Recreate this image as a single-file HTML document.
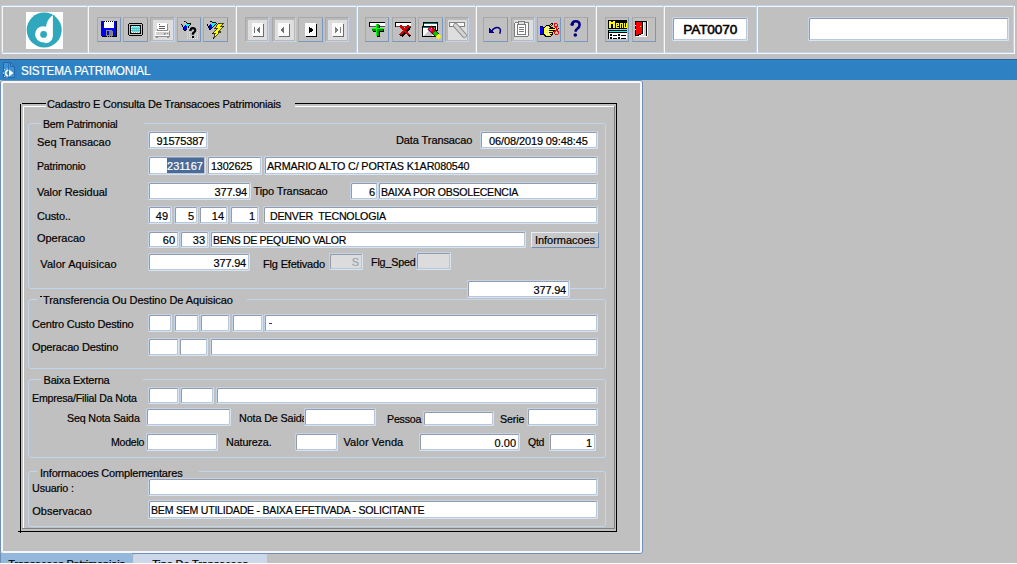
<!DOCTYPE html>
<html><head><meta charset="utf-8"><style>
html,body{margin:0;padding:0;}
body{width:1017px;height:564px;overflow:hidden;background:#c0c0c0;position:relative;font-family:'Liberation Sans', sans-serif;}
body>div, body>svg{position:absolute;white-space:pre;}
</style></head><body>
<div style="left:2px;top:6px;width:1013px;height:48px;box-sizing:border-box;border:1px solid #f4f8fc"></div>
<div style="left:1px;top:5px;width:1013px;height:48px;box-sizing:border-box;border:1px solid #bed2ec"></div>
<div style="left:87px;top:6px;width:1px;height:47px;background:#bed2ec"></div>
<div style="left:88px;top:6px;width:1px;height:47px;background:#f4f8fc"></div>
<div style="left:235px;top:6px;width:1px;height:47px;background:#bed2ec"></div>
<div style="left:236px;top:6px;width:1px;height:47px;background:#f4f8fc"></div>
<div style="left:356px;top:6px;width:1px;height:47px;background:#bed2ec"></div>
<div style="left:357px;top:6px;width:1px;height:47px;background:#f4f8fc"></div>
<div style="left:475px;top:6px;width:1px;height:47px;background:#bed2ec"></div>
<div style="left:476px;top:6px;width:1px;height:47px;background:#f4f8fc"></div>
<div style="left:595px;top:6px;width:1px;height:47px;background:#bed2ec"></div>
<div style="left:596px;top:6px;width:1px;height:47px;background:#f4f8fc"></div>
<div style="left:663px;top:6px;width:1px;height:47px;background:#bed2ec"></div>
<div style="left:664px;top:6px;width:1px;height:47px;background:#f4f8fc"></div>
<div style="left:756px;top:6px;width:1px;height:47px;background:#bed2ec"></div>
<div style="left:757px;top:6px;width:1px;height:47px;background:#f4f8fc"></div>
<div style="left:26px;top:12px;width:37px;height:37px;background:#fff"></div>
<svg style="position:absolute;left:26px;top:12px" width="37" height="37" viewBox="0 0 37 37"><circle cx="18.2" cy="18" r="17.5" fill="#2fa8bd"/><circle cx="17.2" cy="22.3" r="8.1" fill="#fff"/><path d="M26.9 3.2 L26.9 23.5 C26.9 28 24 31.2 18.5 31.2 L19.8 17 C20 10.5 23 5.5 26.9 3.2 Z" fill="#fff"/><circle cx="17.6" cy="22.4" r="3.4" fill="#2fa8bd"/></svg>
<div style="left:97px;top:17px;width:24px;height:25px;box-sizing:border-box;border:1px solid;border-color:#a8a8a8 #7898c0 #7898c0 #a8a8a8"></div>
<div style="left:123px;top:17px;width:25px;height:25px;box-sizing:border-box;border:1px solid;border-color:#a8a8a8 #7898c0 #7898c0 #a8a8a8"></div>
<div style="left:150px;top:17px;width:25px;height:25px;box-sizing:border-box;border:1px solid;border-color:#a8a8a8 #c4d4ec #c4d4ec #a8a8a8"></div>
<div style="left:151px;top:18px;width:23px;height:23px;box-sizing:border-box;border:solid #b9b9b9;border-width:2px 1px 1px 2px;background:#dedede"></div>
<div style="left:177px;top:17px;width:24px;height:25px;box-sizing:border-box;border:1px solid;border-color:#a8a8a8 #7898c0 #7898c0 #a8a8a8"></div>
<div style="left:203px;top:17px;width:25px;height:25px;box-sizing:border-box;border:1px solid;border-color:#a8a8a8 #7898c0 #7898c0 #a8a8a8"></div>
<div style="left:245px;top:17px;width:24px;height:25px;box-sizing:border-box;border:1px solid;border-color:#a8a8a8 #c4d4ec #c4d4ec #a8a8a8"></div>
<div style="left:246px;top:18px;width:22px;height:23px;box-sizing:border-box;border:solid #b9b9b9;border-width:2px 1px 1px 2px;background:#dedede"></div>
<div style="left:272px;top:17px;width:24px;height:25px;box-sizing:border-box;border:1px solid;border-color:#a8a8a8 #c4d4ec #c4d4ec #a8a8a8"></div>
<div style="left:273px;top:18px;width:22px;height:23px;box-sizing:border-box;border:solid #b9b9b9;border-width:2px 1px 1px 2px;background:#dedede"></div>
<div style="left:298px;top:17px;width:25px;height:25px;box-sizing:border-box;border:1px solid;border-color:#a8a8a8 #7898c0 #7898c0 #a8a8a8"></div>
<div style="left:325px;top:17px;width:24px;height:25px;box-sizing:border-box;border:1px solid;border-color:#a8a8a8 #c4d4ec #c4d4ec #a8a8a8"></div>
<div style="left:326px;top:18px;width:22px;height:23px;box-sizing:border-box;border:solid #b9b9b9;border-width:2px 1px 1px 2px;background:#dedede"></div>
<div style="left:365px;top:17px;width:24px;height:25px;box-sizing:border-box;border:1px solid;border-color:#a8a8a8 #7898c0 #7898c0 #a8a8a8"></div>
<div style="left:392px;top:17px;width:24px;height:25px;box-sizing:border-box;border:1px solid;border-color:#a8a8a8 #7898c0 #7898c0 #a8a8a8"></div>
<div style="left:418px;top:17px;width:25px;height:25px;box-sizing:border-box;border:1px solid;border-color:#a8a8a8 #7898c0 #7898c0 #a8a8a8"></div>
<div style="left:445px;top:17px;width:24px;height:25px;box-sizing:border-box;border:1px solid;border-color:#a8a8a8 #c4d4ec #c4d4ec #a8a8a8"></div>
<div style="left:446px;top:18px;width:22px;height:23px;box-sizing:border-box;border:solid #b9b9b9;border-width:2px 1px 1px 2px;background:#dedede"></div>
<div style="left:483px;top:17px;width:25px;height:25px;box-sizing:border-box;border:1px solid;border-color:#a8a8a8 #7898c0 #7898c0 #a8a8a8"></div>
<div style="left:511px;top:17px;width:24px;height:25px;box-sizing:border-box;border:1px solid;border-color:#a8a8a8 #c4d4ec #c4d4ec #a8a8a8"></div>
<div style="left:512px;top:18px;width:22px;height:23px;box-sizing:border-box;border:solid #b9b9b9;border-width:2px 1px 1px 2px;background:#dedede"></div>
<div style="left:537px;top:17px;width:24px;height:25px;box-sizing:border-box;border:1px solid;border-color:#a8a8a8 #7898c0 #7898c0 #a8a8a8"></div>
<div style="left:564px;top:17px;width:24px;height:25px;box-sizing:border-box;border:1px solid;border-color:#a8a8a8 #7898c0 #7898c0 #a8a8a8"></div>
<div style="left:605px;top:17px;width:24px;height:25px;box-sizing:border-box;border:1px solid;border-color:#a8a8a8 #7898c0 #7898c0 #a8a8a8"></div>
<div style="left:632px;top:17px;width:24px;height:25px;box-sizing:border-box;border:1px solid;border-color:#a8a8a8 #7898c0 #7898c0 #a8a8a8"></div>
<svg style="position:absolute;left:0;top:0" width="1017" height="60" viewBox="0 0 1017 60" shape-rendering="crispEdges"><rect x="101" y="21" width="3" height="1" fill="#0000ff"/><rect x="104" y="21" width="1" height="1" fill="#000000"/><rect x="105" y="21" width="1" height="1" fill="#ffffff"/><rect x="106" y="21" width="1" height="1" fill="#000000"/><rect x="107" y="21" width="1" height="1" fill="#ffffff"/><rect x="108" y="21" width="1" height="1" fill="#000000"/><rect x="109" y="21" width="1" height="1" fill="#ffffff"/><rect x="110" y="21" width="1" height="1" fill="#000000"/><rect x="111" y="21" width="1" height="1" fill="#ffffff"/><rect x="112" y="21" width="1" height="1" fill="#000000"/><rect x="113" y="21" width="1" height="1" fill="#ffffff"/><rect x="114" y="21" width="2" height="1" fill="#0000ff"/><rect x="116" y="21" width="1" height="1" fill="#000000"/><rect x="101" y="22" width="3" height="1" fill="#0000ff"/><rect x="104" y="22" width="10" height="1" fill="#ffffff"/><rect x="114" y="22" width="2" height="1" fill="#0000ff"/><rect x="116" y="22" width="1" height="1" fill="#000000"/><rect x="101" y="23" width="3" height="1" fill="#0000ff"/><rect x="104" y="23" width="10" height="1" fill="#ffffff"/><rect x="114" y="23" width="2" height="1" fill="#0000ff"/><rect x="116" y="23" width="1" height="1" fill="#000000"/><rect x="101" y="24" width="1" height="1" fill="#0000ff"/><rect x="102" y="24" width="1" height="1" fill="#000000"/><rect x="103" y="24" width="1" height="1" fill="#0000ff"/><rect x="104" y="24" width="10" height="1" fill="#ffffff"/><rect x="114" y="24" width="2" height="1" fill="#0000ff"/><rect x="116" y="24" width="1" height="1" fill="#000000"/><rect x="101" y="25" width="3" height="1" fill="#0000ff"/><rect x="104" y="25" width="10" height="1" fill="#ffffff"/><rect x="114" y="25" width="2" height="1" fill="#0000ff"/><rect x="116" y="25" width="1" height="1" fill="#000000"/><rect x="101" y="26" width="3" height="1" fill="#0000ff"/><rect x="104" y="26" width="10" height="1" fill="#ffffff"/><rect x="114" y="26" width="2" height="1" fill="#0000ff"/><rect x="116" y="26" width="1" height="1" fill="#000000"/><rect x="101" y="27" width="3" height="1" fill="#0000ff"/><rect x="104" y="27" width="10" height="1" fill="#ffffff"/><rect x="114" y="27" width="2" height="1" fill="#0000ff"/><rect x="116" y="27" width="1" height="1" fill="#000000"/><rect x="101" y="28" width="15" height="1" fill="#0000ff"/><rect x="116" y="28" width="1" height="1" fill="#000000"/><rect x="101" y="29" width="15" height="1" fill="#0000ff"/><rect x="116" y="29" width="1" height="1" fill="#000000"/><rect x="101" y="30" width="5" height="1" fill="#0000ff"/><rect x="106" y="30" width="6" height="1" fill="#8c8c7c"/><rect x="112" y="30" width="4" height="1" fill="#0000ff"/><rect x="116" y="30" width="1" height="1" fill="#000000"/><rect x="101" y="31" width="5" height="1" fill="#0000ff"/><rect x="106" y="31" width="1" height="1" fill="#8c8c7c"/><rect x="107" y="31" width="2" height="1" fill="#0000ff"/><rect x="109" y="31" width="3" height="1" fill="#808080"/><rect x="112" y="31" width="1" height="1" fill="#8c8c7c"/><rect x="113" y="31" width="3" height="1" fill="#0000ff"/><rect x="116" y="31" width="1" height="1" fill="#000000"/><rect x="101" y="32" width="5" height="1" fill="#0000ff"/><rect x="106" y="32" width="1" height="1" fill="#8c8c7c"/><rect x="107" y="32" width="2" height="1" fill="#0000ff"/><rect x="109" y="32" width="3" height="1" fill="#808080"/><rect x="112" y="32" width="1" height="1" fill="#8c8c7c"/><rect x="113" y="32" width="3" height="1" fill="#0000ff"/><rect x="116" y="32" width="1" height="1" fill="#000000"/><rect x="101" y="33" width="5" height="1" fill="#0000ff"/><rect x="106" y="33" width="1" height="1" fill="#8c8c7c"/><rect x="107" y="33" width="2" height="1" fill="#0000ff"/><rect x="109" y="33" width="3" height="1" fill="#808080"/><rect x="112" y="33" width="1" height="1" fill="#8c8c7c"/><rect x="113" y="33" width="3" height="1" fill="#0000ff"/><rect x="116" y="33" width="1" height="1" fill="#000000"/><rect x="101" y="34" width="5" height="1" fill="#0000ff"/><rect x="106" y="34" width="1" height="1" fill="#8c8c7c"/><rect x="107" y="34" width="2" height="1" fill="#0000ff"/><rect x="109" y="34" width="3" height="1" fill="#808080"/><rect x="112" y="34" width="1" height="1" fill="#8c8c7c"/><rect x="113" y="34" width="3" height="1" fill="#0000ff"/><rect x="116" y="34" width="1" height="1" fill="#000000"/><rect x="101" y="35" width="5" height="1" fill="#0000ff"/><rect x="106" y="35" width="7" height="1" fill="#8c8c7c"/><rect x="113" y="35" width="3" height="1" fill="#0000ff"/><rect x="116" y="35" width="1" height="1" fill="#000000"/><rect x="102" y="36" width="5" height="1" fill="#000000"/><rect x="107" y="36" width="1" height="1" fill="#8c8c7c"/><rect x="108" y="36" width="1" height="1" fill="#000000"/><rect x="109" y="36" width="1" height="1" fill="#8c8c7c"/><rect x="110" y="36" width="1" height="1" fill="#000000"/><rect x="111" y="36" width="1" height="1" fill="#8c8c7c"/><rect x="112" y="36" width="5" height="1" fill="#000000"/><rect x="129" y="23" width="13" height="1" fill="#000000"/><rect x="128" y="24" width="1" height="1" fill="#000000"/><rect x="142" y="24" width="1" height="1" fill="#000000"/><rect x="128" y="25" width="1" height="1" fill="#000000"/><rect x="130" y="25" width="11" height="1" fill="#000000"/><rect x="142" y="25" width="1" height="1" fill="#000000"/><rect x="128" y="26" width="1" height="1" fill="#000000"/><rect x="130" y="26" width="1" height="1" fill="#000000"/><rect x="131" y="26" width="1" height="1" fill="#00ffff"/><rect x="132" y="26" width="1" height="1" fill="#ffffff"/><rect x="133" y="26" width="1" height="1" fill="#00ffff"/><rect x="134" y="26" width="1" height="1" fill="#ffffff"/><rect x="135" y="26" width="1" height="1" fill="#00ffff"/><rect x="136" y="26" width="1" height="1" fill="#ffffff"/><rect x="137" y="26" width="1" height="1" fill="#00ffff"/><rect x="138" y="26" width="1" height="1" fill="#ffffff"/><rect x="139" y="26" width="1" height="1" fill="#00ffff"/><rect x="140" y="26" width="1" height="1" fill="#000000"/><rect x="142" y="26" width="1" height="1" fill="#000000"/><rect x="128" y="27" width="1" height="1" fill="#000000"/><rect x="130" y="27" width="1" height="1" fill="#000000"/><rect x="131" y="27" width="1" height="1" fill="#ffffff"/><rect x="132" y="27" width="1" height="1" fill="#00ffff"/><rect x="133" y="27" width="1" height="1" fill="#ffffff"/><rect x="134" y="27" width="1" height="1" fill="#00ffff"/><rect x="135" y="27" width="1" height="1" fill="#ffffff"/><rect x="136" y="27" width="1" height="1" fill="#00ffff"/><rect x="137" y="27" width="1" height="1" fill="#ffffff"/><rect x="138" y="27" width="1" height="1" fill="#00ffff"/><rect x="139" y="27" width="1" height="1" fill="#ffffff"/><rect x="140" y="27" width="1" height="1" fill="#000000"/><rect x="142" y="27" width="1" height="1" fill="#000000"/><rect x="128" y="28" width="1" height="1" fill="#000000"/><rect x="130" y="28" width="1" height="1" fill="#000000"/><rect x="131" y="28" width="9" height="1" fill="#a0a0a0"/><rect x="140" y="28" width="1" height="1" fill="#000000"/><rect x="142" y="28" width="1" height="1" fill="#000000"/><rect x="128" y="29" width="1" height="1" fill="#000000"/><rect x="130" y="29" width="1" height="1" fill="#000000"/><rect x="131" y="29" width="1" height="1" fill="#ffffff"/><rect x="132" y="29" width="1" height="1" fill="#00ffff"/><rect x="133" y="29" width="1" height="1" fill="#ffffff"/><rect x="134" y="29" width="1" height="1" fill="#00ffff"/><rect x="135" y="29" width="1" height="1" fill="#ffffff"/><rect x="136" y="29" width="1" height="1" fill="#00ffff"/><rect x="137" y="29" width="1" height="1" fill="#ffffff"/><rect x="138" y="29" width="1" height="1" fill="#00ffff"/><rect x="139" y="29" width="1" height="1" fill="#ffffff"/><rect x="140" y="29" width="1" height="1" fill="#000000"/><rect x="142" y="29" width="1" height="1" fill="#000000"/><rect x="128" y="30" width="1" height="1" fill="#000000"/><rect x="130" y="30" width="1" height="1" fill="#000000"/><rect x="131" y="30" width="9" height="1" fill="#a0a0a0"/><rect x="140" y="30" width="1" height="1" fill="#000000"/><rect x="142" y="30" width="1" height="1" fill="#000000"/><rect x="128" y="31" width="1" height="1" fill="#000000"/><rect x="130" y="31" width="1" height="1" fill="#000000"/><rect x="131" y="31" width="1" height="1" fill="#ffffff"/><rect x="132" y="31" width="1" height="1" fill="#00ffff"/><rect x="133" y="31" width="1" height="1" fill="#ffffff"/><rect x="134" y="31" width="1" height="1" fill="#00ffff"/><rect x="135" y="31" width="1" height="1" fill="#ffffff"/><rect x="136" y="31" width="1" height="1" fill="#00ffff"/><rect x="137" y="31" width="1" height="1" fill="#ffffff"/><rect x="138" y="31" width="1" height="1" fill="#00ffff"/><rect x="139" y="31" width="1" height="1" fill="#ffffff"/><rect x="140" y="31" width="1" height="1" fill="#000000"/><rect x="142" y="31" width="1" height="1" fill="#000000"/><rect x="128" y="32" width="1" height="1" fill="#000000"/><rect x="130" y="32" width="1" height="1" fill="#000000"/><rect x="131" y="32" width="1" height="1" fill="#00ffff"/><rect x="132" y="32" width="1" height="1" fill="#ffffff"/><rect x="133" y="32" width="1" height="1" fill="#00ffff"/><rect x="134" y="32" width="1" height="1" fill="#ffffff"/><rect x="135" y="32" width="1" height="1" fill="#00ffff"/><rect x="136" y="32" width="1" height="1" fill="#ffffff"/><rect x="137" y="32" width="1" height="1" fill="#00ffff"/><rect x="138" y="32" width="1" height="1" fill="#ffffff"/><rect x="139" y="32" width="1" height="1" fill="#00ffff"/><rect x="140" y="32" width="1" height="1" fill="#000000"/><rect x="142" y="32" width="1" height="1" fill="#000000"/><rect x="128" y="33" width="1" height="1" fill="#000000"/><rect x="130" y="33" width="11" height="1" fill="#000000"/><rect x="142" y="33" width="1" height="1" fill="#000000"/><rect x="128" y="34" width="1" height="1" fill="#000000"/><rect x="142" y="34" width="1" height="1" fill="#000000"/><rect x="129" y="35" width="13" height="1" fill="#000000"/><rect x="157" y="23" width="10" height="1" fill="#ffffff"/><rect x="157" y="24" width="2" height="1" fill="#ffffff"/><rect x="159" y="24" width="1" height="1" fill="#606060"/><rect x="160" y="24" width="7" height="1" fill="#ffffff"/><rect x="167" y="24" width="1" height="1" fill="#909090"/><rect x="157" y="25" width="10" height="1" fill="#ffffff"/><rect x="167" y="25" width="1" height="1" fill="#909090"/><rect x="157" y="26" width="2" height="1" fill="#ffffff"/><rect x="159" y="26" width="6" height="1" fill="#606060"/><rect x="165" y="26" width="2" height="1" fill="#ffffff"/><rect x="167" y="26" width="1" height="1" fill="#909090"/><rect x="157" y="27" width="10" height="1" fill="#ffffff"/><rect x="167" y="27" width="1" height="1" fill="#909090"/><rect x="157" y="28" width="2" height="1" fill="#ffffff"/><rect x="159" y="28" width="6" height="1" fill="#606060"/><rect x="165" y="28" width="2" height="1" fill="#ffffff"/><rect x="167" y="28" width="1" height="1" fill="#909090"/><rect x="157" y="29" width="1" height="1" fill="#909090"/><rect x="158" y="29" width="9" height="1" fill="#ffffff"/><rect x="167" y="29" width="1" height="1" fill="#909090"/><rect x="157" y="30" width="11" height="1" fill="#909090"/><rect x="155" y="31" width="14" height="1" fill="#ffffff"/><rect x="169" y="31" width="1" height="1" fill="#909090"/><rect x="155" y="32" width="1" height="1" fill="#ffffff"/><rect x="156" y="32" width="13" height="1" fill="#d0d0d0"/><rect x="169" y="32" width="1" height="1" fill="#909090"/><rect x="155" y="33" width="1" height="1" fill="#ffffff"/><rect x="156" y="33" width="8" height="1" fill="#d0d0d0"/><rect x="164" y="33" width="2" height="1" fill="#909090"/><rect x="166" y="33" width="1" height="1" fill="#d0d0d0"/><rect x="167" y="33" width="1" height="1" fill="#909090"/><rect x="168" y="33" width="1" height="1" fill="#d0d0d0"/><rect x="169" y="33" width="1" height="1" fill="#909090"/><rect x="155" y="34" width="1" height="1" fill="#ffffff"/><rect x="156" y="34" width="8" height="1" fill="#d0d0d0"/><rect x="164" y="34" width="1" height="1" fill="#909090"/><rect x="165" y="34" width="4" height="1" fill="#d0d0d0"/><rect x="169" y="34" width="1" height="1" fill="#909090"/><rect x="155" y="35" width="14" height="1" fill="#ffffff"/><rect x="169" y="35" width="1" height="1" fill="#909090"/><rect x="155" y="36" width="15" height="1" fill="#909090"/><rect x="156" y="37" width="2" height="1" fill="#909090"/><rect x="167" y="37" width="2" height="1" fill="#909090"/><rect x="184" y="21" width="1" height="1" fill="#000000"/><rect x="185" y="21" width="1" height="1" fill="#ff0000"/><rect x="186" y="22" width="1" height="1" fill="#000000"/><rect x="187" y="23" width="4" height="1" fill="#000000"/><rect x="181" y="24" width="1" height="1" fill="#000000"/><rect x="186" y="24" width="4" height="1" fill="#00ffff"/><rect x="190" y="24" width="1" height="1" fill="#000000"/><rect x="182" y="25" width="1" height="1" fill="#000000"/><rect x="185" y="25" width="1" height="1" fill="#0000ff"/><rect x="186" y="25" width="3" height="1" fill="#00ffff"/><rect x="189" y="25" width="1" height="1" fill="#000000"/><rect x="182" y="26" width="1" height="1" fill="#000000"/><rect x="184" y="26" width="3" height="1" fill="#0000ff"/><rect x="187" y="26" width="1" height="1" fill="#00ffff"/><rect x="188" y="26" width="1" height="1" fill="#000000"/><rect x="183" y="27" width="1" height="1" fill="#000000"/><rect x="184" y="27" width="3" height="1" fill="#0000ff"/><rect x="187" y="27" width="1" height="1" fill="#00ffff"/><rect x="188" y="27" width="1" height="1" fill="#000000"/><rect x="183" y="28" width="1" height="1" fill="#000000"/><rect x="184" y="28" width="3" height="1" fill="#0000ff"/><rect x="187" y="28" width="1" height="1" fill="#000000"/><rect x="183" y="29" width="1" height="1" fill="#000000"/><rect x="184" y="29" width="2" height="1" fill="#0000ff"/><rect x="186" y="29" width="1" height="1" fill="#000000"/><rect x="184" y="30" width="2" height="1" fill="#000000"/><rect x="187" y="28" width="1" height="1" fill="#ffff00"/><rect x="189" y="28" width="1" height="1" fill="#ffff00"/><rect x="187" y="30" width="1" height="1" fill="#ffff00"/><rect x="189" y="30" width="1" height="1" fill="#ffff00"/><rect x="191" y="30" width="1" height="1" fill="#ffff00"/><rect x="193" y="30" width="1" height="1" fill="#ffff00"/><rect x="195" y="30" width="1" height="1" fill="#ffff00"/><rect x="197" y="30" width="1" height="1" fill="#ffff00"/><rect x="187" y="32" width="1" height="1" fill="#ffff00"/><rect x="189" y="32" width="1" height="1" fill="#ffff00"/><rect x="191" y="32" width="1" height="1" fill="#ffff00"/><rect x="193" y="32" width="1" height="1" fill="#ffff00"/><rect x="195" y="32" width="1" height="1" fill="#ffff00"/><rect x="197" y="32" width="1" height="1" fill="#ffff00"/><rect x="187" y="34" width="1" height="1" fill="#ffff00"/><rect x="189" y="34" width="1" height="1" fill="#ffff00"/><rect x="191" y="34" width="1" height="1" fill="#ffff00"/><rect x="193" y="34" width="1" height="1" fill="#ffff00"/><rect x="195" y="34" width="1" height="1" fill="#ffff00"/><rect x="197" y="34" width="1" height="1" fill="#ffff00"/><rect x="187" y="36" width="1" height="1" fill="#ffff00"/><rect x="189" y="36" width="1" height="1" fill="#ffff00"/><rect x="191" y="36" width="1" height="1" fill="#ffff00"/><rect x="193" y="36" width="1" height="1" fill="#ffff00"/><rect x="195" y="36" width="1" height="1" fill="#ffff00"/><rect x="197" y="36" width="1" height="1" fill="#ffff00"/><rect x="187" y="38" width="1" height="1" fill="#ffff00"/><rect x="189" y="38" width="1" height="1" fill="#ffff00"/><rect x="191" y="38" width="1" height="1" fill="#ffff00"/><rect x="193" y="38" width="1" height="1" fill="#ffff00"/><rect x="195" y="38" width="1" height="1" fill="#ffff00"/><rect x="197" y="38" width="1" height="1" fill="#ffff00"/><path d="M190.4 31 C190.4 29 191.5 28.2 192.8 28.2 C 194.5 28.2 195.2 29.4 195.2 30.6 C 195.2 32 193.8 32.5 192.9 33.4 V 34.8" stroke="#000" stroke-width="2.3" fill="none" shape-rendering="geometricPrecision"/><rect x="191.6" y="36" width="2.4" height="2" fill="#000"/><rect x="210" y="21" width="2" height="1" fill="#000000"/><rect x="212" y="22" width="4" height="1" fill="#000000"/><rect x="211" y="23" width="5" height="1" fill="#00ffff"/><rect x="216" y="23" width="1" height="1" fill="#000000"/><rect x="207" y="24" width="1" height="1" fill="#000000"/><rect x="210" y="24" width="1" height="1" fill="#0000ff"/><rect x="211" y="24" width="4" height="1" fill="#00ffff"/><rect x="215" y="24" width="1" height="1" fill="#000000"/><rect x="207" y="25" width="1" height="1" fill="#000000"/><rect x="209" y="25" width="3" height="1" fill="#0000ff"/><rect x="212" y="25" width="2" height="1" fill="#00ffff"/><rect x="214" y="25" width="1" height="1" fill="#000000"/><rect x="208" y="26" width="1" height="1" fill="#000000"/><rect x="209" y="26" width="3" height="1" fill="#0000ff"/><rect x="212" y="26" width="1" height="1" fill="#00ffff"/><rect x="213" y="26" width="1" height="1" fill="#000000"/><rect x="208" y="27" width="1" height="1" fill="#000000"/><rect x="209" y="27" width="3" height="1" fill="#0000ff"/><rect x="212" y="27" width="1" height="1" fill="#000000"/><rect x="209" y="28" width="1" height="1" fill="#000000"/><rect x="210" y="28" width="1" height="1" fill="#0000ff"/><rect x="211" y="28" width="1" height="1" fill="#000000"/><rect x="209" y="29" width="2" height="1" fill="#000000"/><polygon points="223.4,23.1 218.1,23.8 214.7,28.9 217.4,28.4 212.1,33.7 215.4,33.1 213.3,38.6 220.9,31.7 218.4,32.1 223.7,26.1 220.7,26.8" fill="#ffff00" stroke="#000" stroke-width="0.7"/><rect x="252" y="23" width="11" height="13" fill="#fafafa"/><rect x="263" y="24" width="1" height="13" fill="#6c6c6c"/><rect x="253" y="36" width="11" height="1" fill="#6c6c6c"/><rect x="254" y="27" width="1" height="6" fill="#707070"/><polygon points="256,30 259.5,26.5 259.5,33.5" fill="#707070"/><rect x="278" y="23" width="11" height="13" fill="#fafafa"/><rect x="289" y="24" width="1" height="13" fill="#6c6c6c"/><rect x="279" y="36" width="11" height="1" fill="#6c6c6c"/><polygon points="280,30 284,26.5 284,33.5" fill="#707070"/><rect x="305" y="23" width="11" height="13" fill="#fafafa"/><rect x="316" y="24" width="1" height="13" fill="#000"/><rect x="306" y="36" width="11" height="1" fill="#000"/><polygon points="313.5,30 309,26.5 309,33.5" fill="#000"/><rect x="332" y="23" width="11" height="13" fill="#fafafa"/><rect x="343" y="24" width="1" height="13" fill="#6c6c6c"/><rect x="333" y="36" width="11" height="1" fill="#6c6c6c"/><polygon points="338.5,30 335,26.5 335,33.5" fill="#808080"/><rect x="340" y="27" width="1" height="6" fill="#808080"/><rect x="369" y="22" width="16" height="5" fill="#000"/><rect x="370" y="23" width="15" height="3" fill="#fff"/><rect x="370" y="26" width="15" height="1" fill="#505050"/><rect x="377" y="25" width="3" height="12" fill="#000"/><rect x="373" y="29" width="11" height="3" fill="#000"/><rect x="376" y="24" width="3" height="12" fill="#009000"/><rect x="372" y="28" width="11" height="3" fill="#009000"/><rect x="376" y="24" width="1" height="12" fill="#00ff00"/><rect x="372" y="28" width="11" height="1" fill="#00ff00"/><rect x="395" y="22" width="16" height="5" fill="#000"/><rect x="396" y="23" width="15" height="3" fill="#fff"/><rect x="396" y="26" width="15" height="1" fill="#505050"/><path d="M400.5 26 L409.5 35.5 M409.5 26 L400.5 35.5" stroke="#000" stroke-width="2.6" transform="translate(0.8,0.8)"/><path d="M400 25.5 L409 35 M409 25.5 L400 35" stroke="#d00000" stroke-width="2.4"/><rect x="423" y="22" width="15" height="9" fill="#000"/><rect x="424" y="23" width="13" height="7" fill="#fff"/><rect x="424" y="23" width="13" height="1" fill="#008080"/><rect x="422" y="26" width="14" height="11" fill="#000"/><rect x="423" y="27" width="12" height="9" fill="#fff"/><rect x="423" y="27" width="12" height="1" fill="#008080"/><polygon points="424,36 428,31 432,35 431,36" fill="#c8c8c8"/><path d="M429.5 27.5 L434.5 32.5" stroke="#000" stroke-width="5.4" shape-rendering="geometricPrecision"/><path d="M429.5 27.5 L434 32" stroke="#e00000" stroke-width="4.4" shape-rendering="geometricPrecision"/><path d="M429 28.5 L431.5 31" stroke="#ff00ff" stroke-width="2"/><rect x="431" y="28" width="1" height="1" fill="#ffff00"/><path d="M434 32 L437.5 35.5" stroke="#000" stroke-width="4.6" shape-rendering="geometricPrecision"/><path d="M434 32 L437 35" stroke="#00d000" stroke-width="3.6" shape-rendering="geometricPrecision"/><path d="M437 35 L439.8 37.8" stroke="#ffff00" stroke-width="3.8" shape-rendering="geometricPrecision"/><rect x="449" y="22" width="16" height="5" fill="#808080"/><rect x="450" y="23" width="14" height="3" fill="#fafafa"/><path d="M455.5 25.5 L464.5 35.5" stroke="#8c8c8c" stroke-width="5" stroke-linecap="round" shape-rendering="geometricPrecision"/><path d="M455.5 25.5 L464.5 35.5" stroke="#d4d4d4" stroke-width="3.2" stroke-linecap="round" shape-rendering="geometricPrecision"/><polygon points="489,28 494.5,33 489,33" fill="#000080"/><path d="M491.8 30.8 C 493.5 28.5 495 27.6 497 27.6 C 499.3 27.6 500.6 29 500.4 31 L 499.9 33.2" stroke="#000080" stroke-width="1.5" fill="none" stroke-linecap="round" shape-rendering="geometricPrecision"/><rect x="514.5" y="22.5" width="14" height="14" rx="1.5" fill="#fafafa" stroke="#7a7a7a" stroke-width="1"/><rect x="517.5" y="24.5" width="8" height="10" fill="#fff" stroke="#7a7a7a" stroke-width="1"/><path d="M518.5 21.5 L524.5 21.5 L525 24 L518 24 Z" fill="#e0e0e0" stroke="#7a7a7a" stroke-width="1"/><rect x="519" y="27" width="5" height="1" fill="#7a7a7a"/><rect x="519" y="29" width="5" height="1" fill="#7a7a7a"/><rect x="519" y="31" width="5" height="1" fill="#7a7a7a"/><rect x="551" y="23" width="2" height="1" fill="#000000"/><rect x="554" y="23" width="3" height="1" fill="#ff0000"/><rect x="550" y="24" width="1" height="1" fill="#000000"/><rect x="551" y="24" width="1" height="1" fill="#ffff00"/><rect x="552" y="24" width="1" height="1" fill="#000000"/><rect x="554" y="24" width="1" height="1" fill="#ff0000"/><rect x="557" y="24" width="1" height="1" fill="#ff0000"/><rect x="546" y="25" width="4" height="1" fill="#000000"/><rect x="550" y="25" width="1" height="1" fill="#ffff00"/><rect x="551" y="25" width="1" height="1" fill="#000000"/><rect x="554" y="25" width="1" height="1" fill="#ff0000"/><rect x="557" y="25" width="1" height="1" fill="#ff0000"/><rect x="540" y="26" width="3" height="1" fill="#000000"/><rect x="545" y="26" width="1" height="1" fill="#000000"/><rect x="546" y="26" width="3" height="1" fill="#ffff00"/><rect x="549" y="26" width="2" height="1" fill="#000000"/><rect x="554" y="26" width="4" height="1" fill="#ff0000"/><rect x="540" y="27" width="3" height="1" fill="#0000ff"/><rect x="543" y="27" width="2" height="1" fill="#000000"/><rect x="545" y="27" width="1" height="1" fill="#ffff00"/><rect x="546" y="27" width="1" height="1" fill="#ffffff"/><rect x="547" y="27" width="1" height="1" fill="#ffff00"/><rect x="548" y="27" width="1" height="1" fill="#ffffff"/><rect x="549" y="27" width="1" height="1" fill="#ffff00"/><rect x="550" y="27" width="3" height="1" fill="#000000"/><rect x="555" y="27" width="2" height="1" fill="#ff0000"/><rect x="540" y="28" width="3" height="1" fill="#0000ff"/><rect x="543" y="28" width="1" height="1" fill="#000000"/><rect x="544" y="28" width="1" height="1" fill="#ffff00"/><rect x="545" y="28" width="1" height="1" fill="#ffffff"/><rect x="546" y="28" width="1" height="1" fill="#ffff00"/><rect x="547" y="28" width="1" height="1" fill="#ffffff"/><rect x="548" y="28" width="1" height="1" fill="#ffff00"/><rect x="549" y="28" width="6" height="1" fill="#000000"/><rect x="555" y="28" width="1" height="1" fill="#ffff00"/><rect x="556" y="28" width="1" height="1" fill="#ff0000"/><rect x="557" y="28" width="1" height="1" fill="#ffff00"/><rect x="558" y="28" width="1" height="1" fill="#000000"/><rect x="540" y="29" width="3" height="1" fill="#0000ff"/><rect x="543" y="29" width="1" height="1" fill="#000000"/><rect x="544" y="29" width="2" height="1" fill="#ffff00"/><rect x="546" y="29" width="1" height="1" fill="#ffffff"/><rect x="547" y="29" width="1" height="1" fill="#ffff00"/><rect x="548" y="29" width="1" height="1" fill="#ffffff"/><rect x="549" y="29" width="7" height="1" fill="#ffff00"/><rect x="556" y="29" width="1" height="1" fill="#ff0000"/><rect x="557" y="29" width="1" height="1" fill="#000000"/><rect x="540" y="30" width="3" height="1" fill="#0000ff"/><rect x="543" y="30" width="1" height="1" fill="#000000"/><rect x="544" y="30" width="1" height="1" fill="#ffff00"/><rect x="545" y="30" width="1" height="1" fill="#ffffff"/><rect x="546" y="30" width="1" height="1" fill="#ffff00"/><rect x="547" y="30" width="1" height="1" fill="#ffffff"/><rect x="548" y="30" width="1" height="1" fill="#ffff00"/><rect x="549" y="30" width="6" height="1" fill="#000000"/><rect x="555" y="30" width="3" height="1" fill="#ff0000"/><rect x="540" y="31" width="3" height="1" fill="#0000ff"/><rect x="543" y="31" width="1" height="1" fill="#000000"/><rect x="544" y="31" width="2" height="1" fill="#ffff00"/><rect x="546" y="31" width="1" height="1" fill="#ffffff"/><rect x="547" y="31" width="1" height="1" fill="#ffff00"/><rect x="548" y="31" width="1" height="1" fill="#ffffff"/><rect x="549" y="31" width="4" height="1" fill="#ffff00"/><rect x="553" y="31" width="1" height="1" fill="#000000"/><rect x="554" y="31" width="2" height="1" fill="#ff0000"/><rect x="557" y="31" width="2" height="1" fill="#ff0000"/><rect x="540" y="32" width="3" height="1" fill="#0000ff"/><rect x="543" y="32" width="1" height="1" fill="#000000"/><rect x="544" y="32" width="1" height="1" fill="#ffff00"/><rect x="545" y="32" width="1" height="1" fill="#ffffff"/><rect x="546" y="32" width="1" height="1" fill="#ffff00"/><rect x="547" y="32" width="1" height="1" fill="#ffffff"/><rect x="548" y="32" width="1" height="1" fill="#ffff00"/><rect x="549" y="32" width="4" height="1" fill="#000000"/><rect x="554" y="32" width="1" height="1" fill="#ff0000"/><rect x="558" y="32" width="1" height="1" fill="#ff0000"/><rect x="540" y="33" width="3" height="1" fill="#0000ff"/><rect x="543" y="33" width="1" height="1" fill="#000000"/><rect x="544" y="33" width="2" height="1" fill="#ffff00"/><rect x="546" y="33" width="1" height="1" fill="#ffffff"/><rect x="547" y="33" width="1" height="1" fill="#ffff00"/><rect x="548" y="33" width="1" height="1" fill="#ffffff"/><rect x="549" y="33" width="3" height="1" fill="#ffff00"/><rect x="552" y="33" width="1" height="1" fill="#000000"/><rect x="554" y="33" width="1" height="1" fill="#ff0000"/><rect x="558" y="33" width="1" height="1" fill="#ff0000"/><rect x="540" y="34" width="5" height="1" fill="#000000"/><rect x="545" y="34" width="1" height="1" fill="#ffff00"/><rect x="546" y="34" width="1" height="1" fill="#ffffff"/><rect x="547" y="34" width="1" height="1" fill="#ffff00"/><rect x="548" y="34" width="1" height="1" fill="#ffffff"/><rect x="549" y="34" width="1" height="1" fill="#ffff00"/><rect x="550" y="34" width="3" height="1" fill="#000000"/><rect x="555" y="34" width="3" height="1" fill="#ff0000"/><rect x="544" y="35" width="2" height="1" fill="#000000"/><rect x="546" y="35" width="5" height="1" fill="#ffff00"/><rect x="551" y="35" width="1" height="1" fill="#000000"/><rect x="545" y="36" width="6" height="1" fill="#000000"/><path d="M572.3 24.2 C 572.5 22 574 21.3 575.6 21.3 C 578 21.3 579.6 22.8 579.6 25 C 579.6 27 578.5 28 577 29 C 576 29.6 575.6 30.3 575.6 31.8" stroke="#000080" stroke-width="2.6" fill="none" shape-rendering="geometricPrecision"/><circle cx="572.2" cy="24.2" r="1.8" fill="#000080" shape-rendering="geometricPrecision"/><circle cx="575.3" cy="35" r="1.8" fill="#000080" shape-rendering="geometricPrecision"/><rect x="608" y="20" width="19" height="1" fill="#000000"/><rect x="608" y="21" width="1" height="1" fill="#000000"/><rect x="609" y="21" width="2" height="1" fill="#ffff00"/><rect x="611" y="21" width="2" height="1" fill="#000000"/><rect x="613" y="21" width="2" height="1" fill="#ffff00"/><rect x="615" y="21" width="12" height="1" fill="#000000"/><rect x="608" y="22" width="1" height="1" fill="#000000"/><rect x="609" y="22" width="6" height="1" fill="#ffff00"/><rect x="615" y="22" width="12" height="1" fill="#000000"/><rect x="608" y="23" width="1" height="1" fill="#000000"/><rect x="609" y="23" width="6" height="1" fill="#ffff00"/><rect x="615" y="23" width="1" height="1" fill="#000000"/><rect x="616" y="23" width="3" height="1" fill="#ffff00"/><rect x="619" y="23" width="1" height="1" fill="#000000"/><rect x="620" y="23" width="3" height="1" fill="#ffff00"/><rect x="623" y="23" width="1" height="1" fill="#000000"/><rect x="624" y="23" width="1" height="1" fill="#ffff00"/><rect x="625" y="23" width="1" height="1" fill="#000000"/><rect x="626" y="23" width="1" height="1" fill="#ffff00"/><rect x="608" y="24" width="1" height="1" fill="#000000"/><rect x="609" y="24" width="2" height="1" fill="#ffff00"/><rect x="611" y="24" width="2" height="1" fill="#000000"/><rect x="613" y="24" width="2" height="1" fill="#ffff00"/><rect x="615" y="24" width="1" height="1" fill="#000000"/><rect x="616" y="24" width="1" height="1" fill="#ffff00"/><rect x="617" y="24" width="1" height="1" fill="#000000"/><rect x="618" y="24" width="1" height="1" fill="#ffff00"/><rect x="619" y="24" width="1" height="1" fill="#000000"/><rect x="620" y="24" width="1" height="1" fill="#ffff00"/><rect x="621" y="24" width="1" height="1" fill="#000000"/><rect x="622" y="24" width="1" height="1" fill="#ffff00"/><rect x="623" y="24" width="1" height="1" fill="#000000"/><rect x="624" y="24" width="1" height="1" fill="#ffff00"/><rect x="625" y="24" width="1" height="1" fill="#000000"/><rect x="626" y="24" width="1" height="1" fill="#ffff00"/><rect x="608" y="25" width="1" height="1" fill="#000000"/><rect x="609" y="25" width="2" height="1" fill="#ffff00"/><rect x="611" y="25" width="2" height="1" fill="#000000"/><rect x="613" y="25" width="2" height="1" fill="#ffff00"/><rect x="615" y="25" width="1" height="1" fill="#000000"/><rect x="616" y="25" width="3" height="1" fill="#ffff00"/><rect x="619" y="25" width="1" height="1" fill="#000000"/><rect x="620" y="25" width="1" height="1" fill="#ffff00"/><rect x="621" y="25" width="1" height="1" fill="#000000"/><rect x="622" y="25" width="1" height="1" fill="#ffff00"/><rect x="623" y="25" width="1" height="1" fill="#000000"/><rect x="624" y="25" width="1" height="1" fill="#ffff00"/><rect x="625" y="25" width="1" height="1" fill="#000000"/><rect x="626" y="25" width="1" height="1" fill="#ffff00"/><rect x="608" y="26" width="1" height="1" fill="#000000"/><rect x="609" y="26" width="2" height="1" fill="#ffff00"/><rect x="611" y="26" width="2" height="1" fill="#000000"/><rect x="613" y="26" width="2" height="1" fill="#ffff00"/><rect x="615" y="26" width="1" height="1" fill="#000000"/><rect x="616" y="26" width="1" height="1" fill="#ffff00"/><rect x="617" y="26" width="3" height="1" fill="#000000"/><rect x="620" y="26" width="1" height="1" fill="#ffff00"/><rect x="621" y="26" width="1" height="1" fill="#000000"/><rect x="622" y="26" width="1" height="1" fill="#ffff00"/><rect x="623" y="26" width="1" height="1" fill="#000000"/><rect x="624" y="26" width="1" height="1" fill="#ffff00"/><rect x="625" y="26" width="1" height="1" fill="#000000"/><rect x="626" y="26" width="1" height="1" fill="#ffff00"/><rect x="608" y="27" width="1" height="1" fill="#000000"/><rect x="609" y="27" width="2" height="1" fill="#ffff00"/><rect x="611" y="27" width="2" height="1" fill="#000000"/><rect x="613" y="27" width="2" height="1" fill="#ffff00"/><rect x="615" y="27" width="1" height="1" fill="#000000"/><rect x="616" y="27" width="3" height="1" fill="#ffff00"/><rect x="619" y="27" width="1" height="1" fill="#000000"/><rect x="620" y="27" width="1" height="1" fill="#ffff00"/><rect x="621" y="27" width="1" height="1" fill="#000000"/><rect x="622" y="27" width="1" height="1" fill="#ffff00"/><rect x="623" y="27" width="1" height="1" fill="#000000"/><rect x="624" y="27" width="3" height="1" fill="#ffff00"/><rect x="608" y="28" width="19" height="1" fill="#000000"/><rect x="608" y="30" width="19" height="1" fill="#000000"/><rect x="608" y="31" width="1" height="1" fill="#000000"/><rect x="609" y="31" width="18" height="1" fill="#00ffff"/><rect x="608" y="32" width="19" height="1" fill="#000000"/><rect x="608" y="33" width="1" height="1" fill="#000000"/><rect x="609" y="33" width="18" height="1" fill="#ffffff"/><rect x="608" y="34" width="1" height="1" fill="#000000"/><rect x="609" y="34" width="1" height="1" fill="#ffffff"/><rect x="610" y="34" width="2" height="1" fill="#000000"/><rect x="612" y="34" width="6" height="1" fill="#ffffff"/><rect x="618" y="34" width="2" height="1" fill="#000000"/><rect x="620" y="34" width="7" height="1" fill="#ffffff"/><rect x="608" y="35" width="1" height="1" fill="#000000"/><rect x="609" y="35" width="1" height="1" fill="#ffffff"/><rect x="610" y="35" width="2" height="1" fill="#000000"/><rect x="612" y="35" width="1" height="1" fill="#ffffff"/><rect x="613" y="35" width="4" height="1" fill="#000000"/><rect x="617" y="35" width="1" height="1" fill="#ffffff"/><rect x="618" y="35" width="2" height="1" fill="#000000"/><rect x="620" y="35" width="1" height="1" fill="#ffffff"/><rect x="621" y="35" width="5" height="1" fill="#000000"/><rect x="626" y="35" width="1" height="1" fill="#ffffff"/><rect x="608" y="36" width="1" height="1" fill="#000000"/><rect x="609" y="36" width="18" height="1" fill="#ffffff"/><rect x="608" y="37" width="1" height="1" fill="#000000"/><rect x="609" y="37" width="1" height="1" fill="#ffffff"/><rect x="610" y="37" width="2" height="1" fill="#000000"/><rect x="612" y="37" width="6" height="1" fill="#ffffff"/><rect x="618" y="37" width="2" height="1" fill="#000000"/><rect x="620" y="37" width="7" height="1" fill="#ffffff"/><rect x="608" y="38" width="1" height="1" fill="#000000"/><rect x="609" y="38" width="1" height="1" fill="#ffffff"/><rect x="610" y="38" width="2" height="1" fill="#000000"/><rect x="612" y="38" width="1" height="1" fill="#ffffff"/><rect x="613" y="38" width="4" height="1" fill="#000000"/><rect x="617" y="38" width="1" height="1" fill="#ffffff"/><rect x="618" y="38" width="2" height="1" fill="#000000"/><rect x="620" y="38" width="1" height="1" fill="#ffffff"/><rect x="621" y="38" width="5" height="1" fill="#000000"/><rect x="626" y="38" width="1" height="1" fill="#ffffff"/><rect x="635" y="21" width="12" height="1" fill="#000000"/><rect x="647" y="21" width="1" height="1" fill="#ffffff"/><rect x="635" y="22" width="1" height="1" fill="#000000"/><rect x="636" y="22" width="6" height="1" fill="#ff0000"/><rect x="642" y="22" width="1" height="1" fill="#000000"/><rect x="643" y="22" width="1" height="1" fill="#ffffff"/><rect x="644" y="22" width="2" height="1" fill="#d0d0d0"/><rect x="646" y="22" width="1" height="1" fill="#000000"/><rect x="647" y="22" width="1" height="1" fill="#ffffff"/><rect x="635" y="23" width="1" height="1" fill="#000000"/><rect x="636" y="23" width="6" height="1" fill="#ff0000"/><rect x="642" y="23" width="1" height="1" fill="#000000"/><rect x="643" y="23" width="1" height="1" fill="#ffffff"/><rect x="644" y="23" width="2" height="1" fill="#d0d0d0"/><rect x="646" y="23" width="1" height="1" fill="#000000"/><rect x="647" y="23" width="1" height="1" fill="#ffffff"/><rect x="635" y="24" width="1" height="1" fill="#000000"/><rect x="636" y="24" width="6" height="1" fill="#ff0000"/><rect x="642" y="24" width="1" height="1" fill="#000000"/><rect x="643" y="24" width="1" height="1" fill="#ffffff"/><rect x="644" y="24" width="2" height="1" fill="#d0d0d0"/><rect x="646" y="24" width="1" height="1" fill="#000000"/><rect x="647" y="24" width="1" height="1" fill="#ffffff"/><rect x="635" y="25" width="1" height="1" fill="#ffff00"/><rect x="636" y="25" width="6" height="1" fill="#ff0000"/><rect x="642" y="25" width="1" height="1" fill="#000000"/><rect x="643" y="25" width="1" height="1" fill="#ffffff"/><rect x="644" y="25" width="2" height="1" fill="#d0d0d0"/><rect x="646" y="25" width="1" height="1" fill="#000000"/><rect x="647" y="25" width="1" height="1" fill="#ffffff"/><rect x="635" y="26" width="1" height="1" fill="#000000"/><rect x="636" y="26" width="4" height="1" fill="#ff0000"/><rect x="640" y="26" width="1" height="1" fill="#ffff00"/><rect x="641" y="26" width="1" height="1" fill="#ff0000"/><rect x="642" y="26" width="1" height="1" fill="#000000"/><rect x="643" y="26" width="1" height="1" fill="#ffffff"/><rect x="644" y="26" width="2" height="1" fill="#d0d0d0"/><rect x="646" y="26" width="1" height="1" fill="#000000"/><rect x="647" y="26" width="1" height="1" fill="#ffffff"/><rect x="635" y="27" width="1" height="1" fill="#000000"/><rect x="636" y="27" width="6" height="1" fill="#ff0000"/><rect x="642" y="27" width="1" height="1" fill="#000000"/><rect x="643" y="27" width="1" height="1" fill="#ffffff"/><rect x="644" y="27" width="2" height="1" fill="#d0d0d0"/><rect x="646" y="27" width="1" height="1" fill="#000000"/><rect x="647" y="27" width="1" height="1" fill="#ffffff"/><rect x="635" y="28" width="1" height="1" fill="#000000"/><rect x="636" y="28" width="6" height="1" fill="#ff0000"/><rect x="642" y="28" width="1" height="1" fill="#000000"/><rect x="643" y="28" width="1" height="1" fill="#ffffff"/><rect x="644" y="28" width="2" height="1" fill="#d0d0d0"/><rect x="646" y="28" width="1" height="1" fill="#000000"/><rect x="647" y="28" width="1" height="1" fill="#ffffff"/><rect x="635" y="29" width="1" height="1" fill="#ffff00"/><rect x="636" y="29" width="6" height="1" fill="#ff0000"/><rect x="642" y="29" width="1" height="1" fill="#000000"/><rect x="643" y="29" width="1" height="1" fill="#ffffff"/><rect x="644" y="29" width="2" height="1" fill="#d0d0d0"/><rect x="646" y="29" width="1" height="1" fill="#000000"/><rect x="647" y="29" width="1" height="1" fill="#ffffff"/><rect x="635" y="30" width="1" height="1" fill="#000000"/><rect x="636" y="30" width="6" height="1" fill="#ff0000"/><rect x="642" y="30" width="1" height="1" fill="#000000"/><rect x="643" y="30" width="1" height="1" fill="#ffffff"/><rect x="644" y="30" width="2" height="1" fill="#d0d0d0"/><rect x="646" y="30" width="1" height="1" fill="#000000"/><rect x="647" y="30" width="1" height="1" fill="#ffffff"/><rect x="635" y="31" width="1" height="1" fill="#000000"/><rect x="636" y="31" width="6" height="1" fill="#ff0000"/><rect x="642" y="31" width="1" height="1" fill="#000000"/><rect x="643" y="31" width="1" height="1" fill="#ffffff"/><rect x="644" y="31" width="2" height="1" fill="#d0d0d0"/><rect x="646" y="31" width="1" height="1" fill="#000000"/><rect x="647" y="31" width="1" height="1" fill="#ffffff"/><rect x="635" y="32" width="1" height="1" fill="#000000"/><rect x="636" y="32" width="6" height="1" fill="#ff0000"/><rect x="642" y="32" width="1" height="1" fill="#000000"/><rect x="643" y="32" width="1" height="1" fill="#ffffff"/><rect x="644" y="32" width="2" height="1" fill="#d0d0d0"/><rect x="646" y="32" width="1" height="1" fill="#000000"/><rect x="647" y="32" width="1" height="1" fill="#ffffff"/><rect x="635" y="33" width="1" height="1" fill="#000000"/><rect x="636" y="33" width="5" height="1" fill="#ff0000"/><rect x="641" y="33" width="2" height="1" fill="#000000"/><rect x="643" y="33" width="1" height="1" fill="#ffffff"/><rect x="644" y="33" width="2" height="1" fill="#d0d0d0"/><rect x="646" y="33" width="1" height="1" fill="#000000"/><rect x="647" y="33" width="1" height="1" fill="#ffffff"/><rect x="635" y="34" width="1" height="1" fill="#000000"/><rect x="636" y="34" width="2" height="1" fill="#ff0000"/><rect x="638" y="34" width="3" height="1" fill="#000000"/><rect x="641" y="34" width="3" height="1" fill="#ffffff"/><rect x="644" y="34" width="2" height="1" fill="#d0d0d0"/><rect x="646" y="34" width="1" height="1" fill="#000000"/><rect x="647" y="34" width="1" height="1" fill="#ffffff"/><rect x="635" y="35" width="4" height="1" fill="#000000"/><rect x="639" y="35" width="2" height="1" fill="#ffffff"/><rect x="641" y="35" width="5" height="1" fill="#d0d0d0"/><rect x="646" y="35" width="1" height="1" fill="#000000"/><rect x="647" y="35" width="1" height="1" fill="#ffffff"/><rect x="636" y="36" width="11" height="1" fill="#ffffff"/></svg>
<div style="left:672px;top:17px;width:76px;height:24px;box-sizing:border-box;border:1px solid;border-color:#c4d4e8 #d8e4f0 #d8e4f0 #c4d4e8;box-shadow:inset 1px 1px 0 #949cac, inset -1px -1px 0 #b8c8dc;border-radius:2px;background:#fff"></div>
<div style="left:683.3px;top:23px;font:normal 13.6px/13.6px 'Liberation Sans', sans-serif;color:#000;letter-spacing:-0.123px;-webkit-text-stroke:0.2px #000;-webkit-text-stroke:0.55px #000;">PAT0070</div>
<div style="left:808px;top:17px;width:201px;height:24px;box-sizing:border-box;border:1px solid;border-color:#c4d4e8 #d8e4f0 #d8e4f0 #c4d4e8;box-shadow:inset 1px 1px 0 #949cac, inset -1px -1px 0 #b8c8dc;border-radius:2px;background:#fff"></div>
<div style="left:0px;top:59px;width:1017px;height:1px;background:#2a64a0"></div>
<div style="left:0px;top:60px;width:1017px;height:20px;background:#2e81c3"></div>
<svg style="position:absolute;left:0;top:58px" width="18" height="22" viewBox="0 58 18 22"><path d="M3.5 62.5 H10.5 L14.5 66.5 V77.5 H3.5 Z" fill="#3d93d4" stroke="#2667a6" stroke-width="1"/><path d="M8.5 62.5 V77.5" stroke="#2a74b8" stroke-width="1"/><path d="M10.5 62.5 V66.5 H14.5" fill="none" stroke="#2667a6" stroke-width="1"/><polygon points="9,69.5 13.5,73 9,76.5" fill="#fff"/><path d="M8.3 70.3 A2.6 2.6 0 1 0 8.3 75.7" fill="none" stroke="#fff" stroke-width="1.6"/><path d="M4 73 H3 M5 70 L4.3 69.3 M5 76 L4.3 76.7 M7 69.3 V68.5 M7 76.7 V77.5" stroke="#fff" stroke-width="1"/></svg>
<div style="left:21.0px;top:65px;font:normal 12px/12px 'Liberation Sans', sans-serif;color:#fff;letter-spacing:-0.150px;transform:scaleX(0.9794);transform-origin:0 0;-webkit-text-stroke:0.2px #fff;">SISTEMA PATRIMONIAL</div>
<div style="left:0px;top:80px;width:643px;height:474px;box-sizing:border-box;border:1px solid #6f8fb8;border-radius:3px"></div>
<div style="left:1px;top:81px;width:641px;height:472px;box-sizing:border-box;border:2px solid #f4f8fc;border-radius:2px"></div>
<div style="left:22px;top:103px;width:595px;height:1px;background:#000"></div>
<div style="left:20px;top:104px;width:1px;height:429px;background:#000"></div>
<div style="left:18px;top:531px;width:599px;height:1px;background:#000"></div>
<div style="left:616px;top:103px;width:1px;height:429px;background:#000"></div>
<div style="left:23px;top:106px;width:591px;height:1px;background:#fff"></div>
<div style="left:23px;top:106px;width:1px;height:422px;background:#fff"></div>
<div style="left:22px;top:528px;width:593px;height:1px;background:#808080"></div>
<div style="left:614px;top:106px;width:1px;height:423px;background:#808080"></div>
<div style="left:46px;top:99px;width:249px;height:10px;background:#c0c0c0"></div>
<div style="left:47.0px;top:99px;font:normal 11px/11px 'Liberation Sans', sans-serif;color:#000;letter-spacing:-0.181px;-webkit-text-stroke:0.2px #000;">Cadastro E Consulta De Transacoes Patrimoniais</div>
<div style="left:28px;top:123px;width:578px;height:166px;box-sizing:border-box;border:1px solid #c2d6ee;border-radius:3px"></div>
<div style="left:41px;top:122px;width:103px;height:3px;background:#c0c0c0"></div>
<div style="left:28px;top:299px;width:578px;height:70px;box-sizing:border-box;border:1px solid #c2d6ee;border-radius:3px"></div>
<div style="left:37px;top:298px;width:210px;height:3px;background:#c0c0c0"></div>
<div style="left:28px;top:379px;width:578px;height:79px;box-sizing:border-box;border:1px solid #c2d6ee;border-radius:3px"></div>
<div style="left:41px;top:378px;width:102px;height:3px;background:#c0c0c0"></div>
<div style="left:28px;top:471px;width:578px;height:56px;box-sizing:border-box;border:1px solid #c2d6ee;border-radius:3px"></div>
<div style="left:37px;top:470px;width:162px;height:3px;background:#c0c0c0"></div>
<div style="left:43.0px;top:119px;font:normal 11px/11px 'Liberation Sans', sans-serif;color:#000;letter-spacing:-0.215px;transform:scaleX(0.9616);transform-origin:0 0;-webkit-text-stroke:0.2px #000;">Bem Patrimonial</div>
<div style="left:37.0px;top:137px;font:normal 11px/11px 'Liberation Sans', sans-serif;color:#000;letter-spacing:-0.015px;-webkit-text-stroke:0.2px #000;">Seq Transacao</div>
<div style="left:148px;top:131px;width:60px;height:18px;box-sizing:border-box;border:1px solid;border-color:#c4d4e8 #d8e4f0 #d8e4f0 #c4d4e8;box-shadow:inset 1px 1px 0 #949cac, inset -1px -1px 0 #b8c8dc;border-radius:2px;background:#fff"></div>
<div style="left:156.6px;top:136px;font:normal 11px/11px 'Liberation Sans', sans-serif;color:#000;letter-spacing:-0.193px;-webkit-text-stroke:0.2px #000;">91575387</div>
<div style="left:396.0px;top:135px;font:normal 11px/11px 'Liberation Sans', sans-serif;color:#000;letter-spacing:-0.097px;-webkit-text-stroke:0.2px #000;">Data Transacao</div>
<div style="left:480px;top:131px;width:118px;height:18px;box-sizing:border-box;border:1px solid;border-color:#c4d4e8 #d8e4f0 #d8e4f0 #c4d4e8;box-shadow:inset 1px 1px 0 #949cac, inset -1px -1px 0 #b8c8dc;border-radius:2px;background:#fff"></div>
<div style="left:489.0px;top:136px;font:normal 11px/11px 'Liberation Sans', sans-serif;color:#000;letter-spacing:-0.117px;-webkit-text-stroke:0.2px #000;">06/08/2019 09:48:45</div>
<div style="left:37.0px;top:161px;font:normal 11px/11px 'Liberation Sans', sans-serif;color:#000;letter-spacing:-0.212px;transform:scaleX(0.9612);transform-origin:0 0;-webkit-text-stroke:0.2px #000;">Patrimonio</div>
<div style="left:148px;top:156px;width:58px;height:19px;box-sizing:border-box;border:1px solid;border-color:#c4d4e8 #d8e4f0 #d8e4f0 #c4d4e8;box-shadow:inset 1px 1px 0 #949cac, inset -1px -1px 0 #b8c8dc;border-radius:2px;background:#fff"></div>
<div style="left:167px;top:158px;width:37px;height:15px;background:#4a6a98"></div>
<div style="left:167.0px;top:161px;font:normal 11px/11px 'Liberation Sans', sans-serif;color:#fff;letter-spacing:0.018px;-webkit-text-stroke:0.2px #fff;">231167</div>
<div style="left:207px;top:156px;width:55px;height:19px;box-sizing:border-box;border:1px solid;border-color:#c4d4e8 #d8e4f0 #d8e4f0 #c4d4e8;box-shadow:inset 1px 1px 0 #949cac, inset -1px -1px 0 #b8c8dc;border-radius:2px;background:#fff"></div>
<div style="left:210.5px;top:161px;font:normal 11px/11px 'Liberation Sans', sans-serif;color:#000;letter-spacing:-0.126px;transform:scaleX(0.9799);transform-origin:0 0;-webkit-text-stroke:0.2px #000;">1302625</div>
<div style="left:264px;top:156px;width:334px;height:19px;box-sizing:border-box;border:1px solid;border-color:#c4d4e8 #d8e4f0 #d8e4f0 #c4d4e8;box-shadow:inset 1px 1px 0 #949cac, inset -1px -1px 0 #b8c8dc;border-radius:2px;background:#fff"></div>
<div style="left:267.0px;top:161px;font:normal 11px/11px 'Liberation Sans', sans-serif;color:#000;letter-spacing:-0.138px;transform:scaleX(0.9789);transform-origin:0 0;-webkit-text-stroke:0.2px #000;">ARMARIO ALTO C/ PORTAS K1AR080540</div>
<div style="left:37.0px;top:187px;font:normal 11px/11px 'Liberation Sans', sans-serif;color:#000;letter-spacing:-0.037px;-webkit-text-stroke:0.2px #000;">Valor Residual</div>
<div style="left:148px;top:182px;width:103px;height:18px;box-sizing:border-box;border:1px solid;border-color:#c4d4e8 #d8e4f0 #d8e4f0 #c4d4e8;box-shadow:inset 1px 1px 0 #949cac, inset -1px -1px 0 #b8c8dc;border-radius:2px;background:#fff"></div>
<div style="left:214.6px;top:187px;font:normal 11px/11px 'Liberation Sans', sans-serif;color:#000;letter-spacing:-0.207px;-webkit-text-stroke:0.2px #000;">377.94</div>
<div style="left:253.5px;top:186px;font:normal 11px/11px 'Liberation Sans', sans-serif;color:#000;letter-spacing:-0.101px;-webkit-text-stroke:0.2px #000;">Tipo Transacao</div>
<div style="left:350px;top:182px;width:28px;height:18px;box-sizing:border-box;border:1px solid;border-color:#c4d4e8 #d8e4f0 #d8e4f0 #c4d4e8;box-shadow:inset 1px 1px 0 #949cac, inset -1px -1px 0 #b8c8dc;border-radius:2px;background:#fff"></div>
<div style="left:368.9px;top:187px;font:normal 11px/11px 'Liberation Sans', sans-serif;color:#000;-webkit-text-stroke:0.2px #000;">6</div>
<div style="left:378px;top:182px;width:220px;height:18px;box-sizing:border-box;border:1px solid;border-color:#c4d4e8 #d8e4f0 #d8e4f0 #c4d4e8;box-shadow:inset 1px 1px 0 #949cac, inset -1px -1px 0 #b8c8dc;border-radius:2px;background:#fff"></div>
<div style="left:381.0px;top:187px;font:normal 11px/11px 'Liberation Sans', sans-serif;color:#000;letter-spacing:-0.271px;transform:scaleX(0.9616);transform-origin:0 0;-webkit-text-stroke:0.2px #000;">BAIXA POR OBSOLECENCIA</div>
<div style="left:37.0px;top:211px;font:normal 11px/11px 'Liberation Sans', sans-serif;color:#000;letter-spacing:-0.164px;-webkit-text-stroke:0.2px #000;">Custo..</div>
<div style="left:148px;top:206px;width:24px;height:18px;box-sizing:border-box;border:1px solid;border-color:#c4d4e8 #d8e4f0 #d8e4f0 #c4d4e8;box-shadow:inset 1px 1px 0 #949cac, inset -1px -1px 0 #b8c8dc;border-radius:2px;background:#fff"></div>
<div style="left:155.8px;top:211px;font:normal 11px/11px 'Liberation Sans', sans-serif;color:#000;-webkit-text-stroke:0.2px #000;">49</div>
<div style="left:174px;top:206px;width:24px;height:18px;box-sizing:border-box;border:1px solid;border-color:#c4d4e8 #d8e4f0 #d8e4f0 #c4d4e8;box-shadow:inset 1px 1px 0 #949cac, inset -1px -1px 0 #b8c8dc;border-radius:2px;background:#fff"></div>
<div style="left:187.9px;top:211px;font:normal 11px/11px 'Liberation Sans', sans-serif;color:#000;-webkit-text-stroke:0.2px #000;">5</div>
<div style="left:199px;top:206px;width:29px;height:18px;box-sizing:border-box;border:1px solid;border-color:#c4d4e8 #d8e4f0 #d8e4f0 #c4d4e8;box-shadow:inset 1px 1px 0 #949cac, inset -1px -1px 0 #b8c8dc;border-radius:2px;background:#fff"></div>
<div style="left:211.8px;top:211px;font:normal 11px/11px 'Liberation Sans', sans-serif;color:#000;-webkit-text-stroke:0.2px #000;">14</div>
<div style="left:230px;top:206px;width:29px;height:18px;box-sizing:border-box;border:1px solid;border-color:#c4d4e8 #d8e4f0 #d8e4f0 #c4d4e8;box-shadow:inset 1px 1px 0 #949cac, inset -1px -1px 0 #b8c8dc;border-radius:2px;background:#fff"></div>
<div style="left:248.9px;top:211px;font:normal 11px/11px 'Liberation Sans', sans-serif;color:#000;-webkit-text-stroke:0.2px #000;">1</div>
<div style="left:263px;top:206px;width:335px;height:18px;box-sizing:border-box;border:1px solid;border-color:#c4d4e8 #d8e4f0 #d8e4f0 #c4d4e8;box-shadow:inset 1px 1px 0 #949cac, inset -1px -1px 0 #b8c8dc;border-radius:2px;background:#fff"></div>
<div style="left:269.5px;top:211px;font:normal 11px/11px 'Liberation Sans', sans-serif;color:#000;letter-spacing:-0.232px;transform:scaleX(0.9674);transform-origin:0 0;-webkit-text-stroke:0.2px #000;">DENVER  TECNOLOGIA</div>
<div style="left:37.0px;top:233px;font:normal 11px/11px 'Liberation Sans', sans-serif;color:#000;letter-spacing:-0.026px;-webkit-text-stroke:0.2px #000;">Operacao</div>
<div style="left:148px;top:231px;width:31px;height:17px;box-sizing:border-box;border:1px solid;border-color:#c4d4e8 #d8e4f0 #d8e4f0 #c4d4e8;box-shadow:inset 1px 1px 0 #949cac, inset -1px -1px 0 #b8c8dc;border-radius:2px;background:#fff"></div>
<div style="left:162.8px;top:235px;font:normal 11px/11px 'Liberation Sans', sans-serif;color:#000;-webkit-text-stroke:0.2px #000;">60</div>
<div style="left:180px;top:231px;width:29px;height:17px;box-sizing:border-box;border:1px solid;border-color:#c4d4e8 #d8e4f0 #d8e4f0 #c4d4e8;box-shadow:inset 1px 1px 0 #949cac, inset -1px -1px 0 #b8c8dc;border-radius:2px;background:#fff"></div>
<div style="left:192.8px;top:235px;font:normal 11px/11px 'Liberation Sans', sans-serif;color:#000;-webkit-text-stroke:0.2px #000;">33</div>
<div style="left:210px;top:231px;width:316px;height:17px;box-sizing:border-box;border:1px solid;border-color:#c4d4e8 #d8e4f0 #d8e4f0 #c4d4e8;box-shadow:inset 1px 1px 0 #949cac, inset -1px -1px 0 #b8c8dc;border-radius:2px;background:#fff"></div>
<div style="left:213.4px;top:235px;font:normal 11px/11px 'Liberation Sans', sans-serif;color:#000;letter-spacing:-0.321px;transform:scaleX(0.9558);transform-origin:0 0;-webkit-text-stroke:0.2px #000;">BENS DE PEQUENO VALOR</div>
<div style="left:531px;top:232px;width:68px;height:16px;box-sizing:border-box;border:1px solid;border-color:#e8eef6 #6f8fb8 #6f8fb8 #e8eef6;background:#c8c8c8"></div>
<div style="left:535.0px;top:235px;font:normal 11px/11px 'Liberation Sans', sans-serif;color:#000;letter-spacing:-0.048px;-webkit-text-stroke:0.2px #000;">Informacoes</div>
<div style="left:40.3px;top:259px;font:normal 11px/11px 'Liberation Sans', sans-serif;color:#000;letter-spacing:0.092px;-webkit-text-stroke:0.2px #000;">Valor Aquisicao</div>
<div style="left:148px;top:253px;width:102px;height:18px;box-sizing:border-box;border:1px solid;border-color:#c4d4e8 #d8e4f0 #d8e4f0 #c4d4e8;box-shadow:inset 1px 1px 0 #949cac, inset -1px -1px 0 #b8c8dc;border-radius:2px;background:#fff"></div>
<div style="left:213.6px;top:258px;font:normal 11px/11px 'Liberation Sans', sans-serif;color:#000;letter-spacing:-0.207px;-webkit-text-stroke:0.2px #000;">377.94</div>
<div style="left:263.0px;top:259px;font:normal 11px/11px 'Liberation Sans', sans-serif;color:#000;letter-spacing:-0.177px;-webkit-text-stroke:0.2px #000;">Flg Efetivado</div>
<div style="left:329px;top:253px;width:34px;height:17px;box-sizing:border-box;border:1px solid;border-color:#c4d4e8 #d8e4f0 #d8e4f0 #c4d4e8;box-shadow:inset 1px 1px 0 #949cac, inset -1px -1px 0 #b8c8dc;border-radius:2px;background:#dcdcdc"></div>
<div style="left:351.7px;top:257px;font:normal 11px/11px 'Liberation Sans', sans-serif;color:#9aa4b4;-webkit-text-stroke:0.2px #9aa4b4;">S</div>
<div style="left:370.5px;top:257px;font:normal 11px/11px 'Liberation Sans', sans-serif;color:#000;letter-spacing:-0.160px;transform:scaleX(0.9736);transform-origin:0 0;-webkit-text-stroke:0.2px #000;">Flg_Sped</div>
<div style="left:416px;top:252px;width:35px;height:18px;box-sizing:border-box;border:1px solid;border-color:#c4d4e8 #d8e4f0 #d8e4f0 #c4d4e8;box-shadow:inset 1px 1px 0 #949cac, inset -1px -1px 0 #b8c8dc;border-radius:2px;background:#dcdcdc"></div>
<div style="left:467px;top:280px;width:103px;height:18px;box-sizing:border-box;border:1px solid;border-color:#c4d4e8 #d8e4f0 #d8e4f0 #c4d4e8;box-shadow:inset 1px 1px 0 #949cac, inset -1px -1px 0 #b8c8dc;border-radius:2px;background:#fff"></div>
<div style="left:533.6px;top:285px;font:normal 11px/11px 'Liberation Sans', sans-serif;color:#000;letter-spacing:-0.207px;-webkit-text-stroke:0.2px #000;">377.94</div>
<div style="left:40px;top:296px;width:2px;height:1px;background:#000"></div>
<div style="left:43.0px;top:295px;font:normal 11px/11px 'Liberation Sans', sans-serif;color:#000;letter-spacing:-0.062px;-webkit-text-stroke:0.2px #000;">Transferencia Ou Destino De Aquisicao</div>
<div style="left:32.0px;top:319px;font:normal 11px/11px 'Liberation Sans', sans-serif;color:#000;letter-spacing:-0.183px;-webkit-text-stroke:0.2px #000;">Centro Custo Destino</div>
<div style="left:148px;top:314px;width:24px;height:18px;box-sizing:border-box;border:1px solid;border-color:#c4d4e8 #d8e4f0 #d8e4f0 #c4d4e8;box-shadow:inset 1px 1px 0 #949cac, inset -1px -1px 0 #b8c8dc;border-radius:2px;background:#fff"></div>
<div style="left:174px;top:314px;width:25px;height:18px;box-sizing:border-box;border:1px solid;border-color:#c4d4e8 #d8e4f0 #d8e4f0 #c4d4e8;box-shadow:inset 1px 1px 0 #949cac, inset -1px -1px 0 #b8c8dc;border-radius:2px;background:#fff"></div>
<div style="left:200px;top:314px;width:30px;height:18px;box-sizing:border-box;border:1px solid;border-color:#c4d4e8 #d8e4f0 #d8e4f0 #c4d4e8;box-shadow:inset 1px 1px 0 #949cac, inset -1px -1px 0 #b8c8dc;border-radius:2px;background:#fff"></div>
<div style="left:232px;top:314px;width:31px;height:18px;box-sizing:border-box;border:1px solid;border-color:#c4d4e8 #d8e4f0 #d8e4f0 #c4d4e8;box-shadow:inset 1px 1px 0 #949cac, inset -1px -1px 0 #b8c8dc;border-radius:2px;background:#fff"></div>
<div style="left:264px;top:314px;width:334px;height:18px;box-sizing:border-box;border:1px solid;border-color:#c4d4e8 #d8e4f0 #d8e4f0 #c4d4e8;box-shadow:inset 1px 1px 0 #949cac, inset -1px -1px 0 #b8c8dc;border-radius:2px;background:#fff"></div>
<div style="left:269px;top:323px;width:3px;height:1px;background:#5a1a90"></div>
<div style="left:32.0px;top:342px;font:normal 11px/11px 'Liberation Sans', sans-serif;color:#000;letter-spacing:-0.154px;-webkit-text-stroke:0.2px #000;">Operacao Destino</div>
<div style="left:148px;top:338px;width:31px;height:18px;box-sizing:border-box;border:1px solid;border-color:#c4d4e8 #d8e4f0 #d8e4f0 #c4d4e8;box-shadow:inset 1px 1px 0 #949cac, inset -1px -1px 0 #b8c8dc;border-radius:2px;background:#fff"></div>
<div style="left:179px;top:338px;width:29px;height:18px;box-sizing:border-box;border:1px solid;border-color:#c4d4e8 #d8e4f0 #d8e4f0 #c4d4e8;box-shadow:inset 1px 1px 0 #949cac, inset -1px -1px 0 #b8c8dc;border-radius:2px;background:#fff"></div>
<div style="left:210px;top:338px;width:388px;height:18px;box-sizing:border-box;border:1px solid;border-color:#c4d4e8 #d8e4f0 #d8e4f0 #c4d4e8;box-shadow:inset 1px 1px 0 #949cac, inset -1px -1px 0 #b8c8dc;border-radius:2px;background:#fff"></div>
<div style="left:43.5px;top:375px;font:normal 11px/11px 'Liberation Sans', sans-serif;color:#000;letter-spacing:-0.191px;-webkit-text-stroke:0.2px #000;">Baixa Externa</div>
<div style="left:32.3px;top:393px;font:normal 11px/11px 'Liberation Sans', sans-serif;color:#000;letter-spacing:-0.196px;transform:scaleX(0.9633);transform-origin:0 0;-webkit-text-stroke:0.2px #000;">Empresa/Filial Da Nota</div>
<div style="left:148px;top:387px;width:31px;height:17px;box-sizing:border-box;border:1px solid;border-color:#c4d4e8 #d8e4f0 #d8e4f0 #c4d4e8;box-shadow:inset 1px 1px 0 #949cac, inset -1px -1px 0 #b8c8dc;border-radius:2px;background:#fff"></div>
<div style="left:180px;top:387px;width:34px;height:17px;box-sizing:border-box;border:1px solid;border-color:#c4d4e8 #d8e4f0 #d8e4f0 #c4d4e8;box-shadow:inset 1px 1px 0 #949cac, inset -1px -1px 0 #b8c8dc;border-radius:2px;background:#fff"></div>
<div style="left:216px;top:387px;width:382px;height:17px;box-sizing:border-box;border:1px solid;border-color:#c4d4e8 #d8e4f0 #d8e4f0 #c4d4e8;box-shadow:inset 1px 1px 0 #949cac, inset -1px -1px 0 #b8c8dc;border-radius:2px;background:#fff"></div>
<div style="left:67.3px;top:413px;font:normal 11px/11px 'Liberation Sans', sans-serif;color:#000;letter-spacing:-0.160px;transform:scaleX(0.9717);transform-origin:0 0;-webkit-text-stroke:0.2px #000;">Seq Nota Saida</div>
<div style="left:146px;top:408px;width:85px;height:18px;box-sizing:border-box;border:1px solid;border-color:#c4d4e8 #d8e4f0 #d8e4f0 #c4d4e8;box-shadow:inset 1px 1px 0 #949cac, inset -1px -1px 0 #b8c8dc;border-radius:2px;background:#fff"></div>
<div style="left:239.3px;top:413px;font:normal 11px/11px 'Liberation Sans', sans-serif;color:#000;letter-spacing:-0.120px;transform:scaleX(0.9787);transform-origin:0 0;-webkit-text-stroke:0.2px #000;">Nota De Saida</div>
<div style="left:304px;top:408px;width:72px;height:18px;box-sizing:border-box;border:1px solid;border-color:#c4d4e8 #d8e4f0 #d8e4f0 #c4d4e8;box-shadow:inset 1px 1px 0 #949cac, inset -1px -1px 0 #b8c8dc;border-radius:2px;background:#fff"></div>
<div style="left:387.3px;top:414px;font:normal 11px/11px 'Liberation Sans', sans-serif;color:#000;letter-spacing:-0.206px;transform:scaleX(0.9674);transform-origin:0 0;-webkit-text-stroke:0.2px #000;">Pessoa</div>
<div style="left:423px;top:411px;width:71px;height:15px;box-sizing:border-box;border:1px solid;border-color:#c4d4e8 #d8e4f0 #d8e4f0 #c4d4e8;box-shadow:inset 1px 1px 0 #949cac, inset -1px -1px 0 #b8c8dc;border-radius:2px;background:#fff"></div>
<div style="left:499.5px;top:414px;font:normal 11px/11px 'Liberation Sans', sans-serif;color:#000;letter-spacing:-0.152px;transform:scaleX(0.9712);transform-origin:0 0;-webkit-text-stroke:0.2px #000;">Serie</div>
<div style="left:527px;top:408px;width:71px;height:18px;box-sizing:border-box;border:1px solid;border-color:#c4d4e8 #d8e4f0 #d8e4f0 #c4d4e8;box-shadow:inset 1px 1px 0 #949cac, inset -1px -1px 0 #b8c8dc;border-radius:2px;background:#fff"></div>
<div style="left:111.3px;top:437px;font:normal 11px/11px 'Liberation Sans', sans-serif;color:#000;letter-spacing:-0.250px;transform:scaleX(0.9601);transform-origin:0 0;-webkit-text-stroke:0.2px #000;">Modelo</div>
<div style="left:146px;top:433px;width:72px;height:18px;box-sizing:border-box;border:1px solid;border-color:#c4d4e8 #d8e4f0 #d8e4f0 #c4d4e8;box-shadow:inset 1px 1px 0 #949cac, inset -1px -1px 0 #b8c8dc;border-radius:2px;background:#fff"></div>
<div style="left:225.5px;top:437px;font:normal 11px/11px 'Liberation Sans', sans-serif;color:#000;letter-spacing:-0.119px;transform:scaleX(0.9781);transform-origin:0 0;-webkit-text-stroke:0.2px #000;">Natureza.</div>
<div style="left:295px;top:433px;width:43px;height:18px;box-sizing:border-box;border:1px solid;border-color:#c4d4e8 #d8e4f0 #d8e4f0 #c4d4e8;box-shadow:inset 1px 1px 0 #949cac, inset -1px -1px 0 #b8c8dc;border-radius:2px;background:#fff"></div>
<div style="left:343.5px;top:437px;font:normal 11px/11px 'Liberation Sans', sans-serif;color:#000;letter-spacing:0.062px;-webkit-text-stroke:0.2px #000;">Valor Venda</div>
<div style="left:419px;top:433px;width:101px;height:18px;box-sizing:border-box;border:1px solid;border-color:#c4d4e8 #d8e4f0 #d8e4f0 #c4d4e8;box-shadow:inset 1px 1px 0 #949cac, inset -1px -1px 0 #b8c8dc;border-radius:2px;background:#fff"></div>
<div style="left:494.6px;top:438px;font:normal 11px/11px 'Liberation Sans', sans-serif;color:#000;-webkit-text-stroke:0.2px #000;">0.00</div>
<div style="left:527.6px;top:437px;font:normal 11px/11px 'Liberation Sans', sans-serif;color:#000;letter-spacing:-0.285px;transform:scaleX(0.9540);transform-origin:0 0;-webkit-text-stroke:0.2px #000;">Qtd</div>
<div style="left:549px;top:433px;width:47px;height:18px;box-sizing:border-box;border:1px solid;border-color:#c4d4e8 #d8e4f0 #d8e4f0 #c4d4e8;box-shadow:inset 1px 1px 0 #949cac, inset -1px -1px 0 #b8c8dc;border-radius:2px;background:#fff"></div>
<div style="left:585.9px;top:438px;font:normal 11px/11px 'Liberation Sans', sans-serif;color:#000;-webkit-text-stroke:0.2px #000;">1</div>
<div style="left:40.0px;top:468px;font:normal 11px/11px 'Liberation Sans', sans-serif;color:#000;letter-spacing:-0.186px;-webkit-text-stroke:0.2px #000;">Informacoes Complementares</div>
<div style="left:32.2px;top:483px;font:normal 11px/11px 'Liberation Sans', sans-serif;color:#000;letter-spacing:-0.120px;transform:scaleX(0.9760);transform-origin:0 0;-webkit-text-stroke:0.2px #000;">Usuario :</div>
<div style="left:148px;top:478px;width:450px;height:18px;box-sizing:border-box;border:1px solid;border-color:#c4d4e8 #d8e4f0 #d8e4f0 #c4d4e8;box-shadow:inset 1px 1px 0 #949cac, inset -1px -1px 0 #b8c8dc;border-radius:2px;background:#fff"></div>
<div style="left:32.2px;top:506px;font:normal 11px/11px 'Liberation Sans', sans-serif;color:#000;letter-spacing:0.029px;-webkit-text-stroke:0.2px #000;">Observacao</div>
<div style="left:148px;top:500px;width:450px;height:19px;box-sizing:border-box;border:1px solid;border-color:#c4d4e8 #d8e4f0 #d8e4f0 #c4d4e8;box-shadow:inset 1px 1px 0 #949cac, inset -1px -1px 0 #b8c8dc;border-radius:2px;background:#fff"></div>
<div style="left:151.0px;top:505px;font:normal 11px/11px 'Liberation Sans', sans-serif;color:#000;letter-spacing:-0.247px;transform:scaleX(0.9609);transform-origin:0 0;-webkit-text-stroke:0.2px #000;">BEM SEM UTILIDADE - BAIXA EFETIVADA - SOLICITANTE</div>
<div style="left:1px;top:553px;width:131px;height:10px;background:#94b8dc"></div>
<div style="left:0px;top:553px;width:1px;height:10px;background:#6f8fb8"></div>
<div style="left:132px;top:554px;width:134px;height:9px;background:#ccd8ea;border-top-left-radius:3px;border-left:1px solid #9fb4cc"></div>
<div style="left:8.3px;top:559px;font:normal 11px/11px 'Liberation Sans', sans-serif;color:#000;letter-spacing:-0.184px;-webkit-text-stroke:0.2px #000;">Transacoes Patrimoniais</div>
<div style="left:152.2px;top:559px;font:normal 11px/11px 'Liberation Sans', sans-serif;color:#000;letter-spacing:-0.129px;-webkit-text-stroke:0.2px #000;">Tipo De Transacoes</div>
<div style="left:0px;top:563px;width:1017px;height:1px;background:#fff"></div>
</body></html>
